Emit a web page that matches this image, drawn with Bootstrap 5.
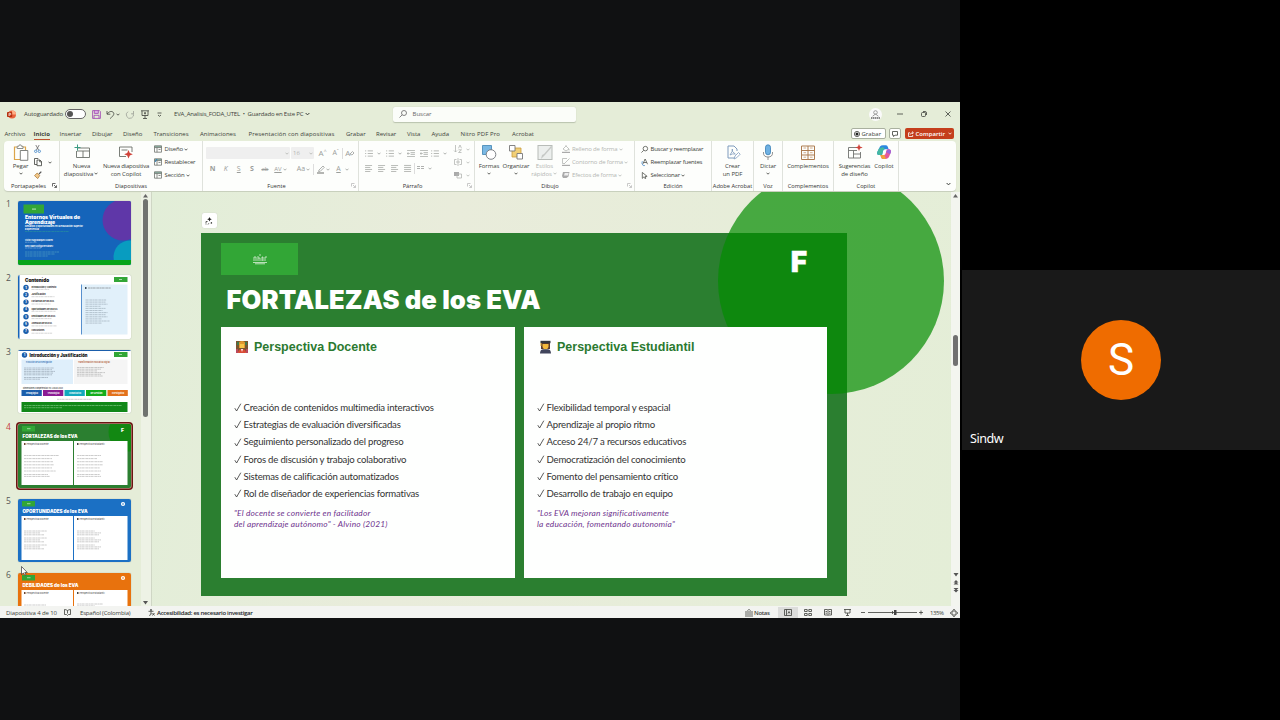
<!DOCTYPE html>
<html lang="es">
<head>
    <meta charset="UTF-8">
    <meta name="viewport" content="width=device-width, initial-scale=1.0">
    <title>EVA_Analisis_FODA_UTEL</title>
    <link rel="stylesheet" href="https://cdn.jsdelivr.net/npm/bootstrap@5.3.3/dist/css/bootstrap.min.css">
    <style>
        body {
            width: 1280px;
            height: 720px;
            background: #000;
            font-family: "Open Sans", "Noto Sans", sans-serif;
            font-size: 6px;
            line-height: 8px;
            color: #3c3f3a;
        }
        svg { display: block; flex: none; overflow: visible; }
        .ln { fill: none; stroke: currentColor; stroke-width: .8; }
        .shared { width: 960px; background: #101112; padding: 102px 0; }
        .ppt { height: 516px; background: #e5edd8; }

        /* title bar */
        .titlebar { height: 24px; padding-left: 7px; }
        .titlebar > * { flex: none; }
        .auto-label { width: 41px; margin-left: 8px; letter-spacing: -.1px; }
        .doc-name { width: 131px; margin-left: 12px; letter-spacing: -.17px; white-space: nowrap; }
        .switch { width: 21px; height: 10px; border: .8px solid #666; border-radius: 5px; background: #fff; padding: 1px; }
        .switch i { display: block; width: 6px; height: 6px; border-radius: 50%; background: #555; }
        .finder { width: 183px; height: 15px; background: #fbfdf9; border-radius: 2px; box-shadow: 0 .5px 1px #b9c2ae; color: #666; margin-left: 82.5px; padding-left: 6px; }
        .user { width: 13px; height: 13px; border-radius: 50%; background: #fafafa; margin-left: 293px; }

        /* tabs */
        .tabs { height: 15px; padding-left: 4.5px; }
        .tab-grid { display: grid; width: 846px; grid-template-columns: 29px 26px 32.5px 31px 30.5px 46.5px 48.5px 97.5px 30px 31px 24.5px 29px 51.5px 40px; }
        .tab-grid span { white-space: nowrap; }
        .tab-grid .wide-tab { letter-spacing: .11px; }
        .tab-grid .on b { border-bottom: 1px solid #c0512f; padding-bottom: 1px; }
        .pill { height: 11px; border: .8px solid #a9b09f; border-radius: 2px; background: #fff; }
        .share { width: 49px; height: 11px; border-radius: 2px; background: #c43e1c; color: #fff; }

        /* ribbon */
        .ribbon { height: 50px; margin: 0 4px; width: 952px; background: #fdfefc; border-radius: 4px; box-shadow: 0 1px 1px #c5ccbb; }
        .grp { position: relative; flex: none; border-right: 1px solid #dfe2dc; }
        .grp-body { height: 41px; padding-top: 3px; }
        .grp-name { height: 9px; line-height: 9px; font-size: 5.7px; text-align: center; color: #333; white-space: nowrap; }
        .corner { position: absolute; right: 2px; bottom: 3px; color: #bbb; }
        .w-clip { width: 56px; } .w-slides { width: 143px; } .w-font { width: 156px; } .w-para { width: 116px; }
        .w-draw { width: 160px; } .w-edit { width: 77px; } .w-pdf { width: 42px; } .w-voice { width: 29px; }
        .w-addin { width: 51px; } .w-cop { width: 65px; }
        .big { display: flex; flex-direction: column; align-items: center; flex: none; text-align: center; white-space: nowrap; line-height: 8px; letter-spacing: -.08px; }
        .big svg:first-child { margin-bottom: 1px; }
        .off { color: #b4b6b3; }
        .stack { display: grid; grid-auto-rows: 13px; grid-template-rows: 13px 13px 13px; align-content: start; align-items: center; margin-top: -1.5px; letter-spacing: -.16px; }
        .stack > div { display: flex; align-items: center; gap: 2.5px; white-space: nowrap; height: 10px; }
        .edit-stack { height: 39px; margin: 1.5px 0 .5px 6px; letter-spacing: -.23px; }
        .chev { width: 4px; height: 3px; margin: 0 1px; display: inline-block; }
        .combo { height: 12px; background: #efefef; border-radius: 1px; color: #b4b6b3; }
        .cells { display: flex; align-items: center; height: 12px; color: #9b9d9a; }
        .cells > span { width: 13.1px; flex: none; display: flex; align-items: center; justify-content: center; }
        .cells > .wide { width: 19px; }
        .rule { width: 1px; height: 11px; background: #ddd; flex: none; }

        /* thumbnails */
        .work { height: 414px; }
        .rail { width: 141px; overflow: hidden; padding-top: 9px; }
        .thumb-row { height: 74.4px; padding-left: 6px; font: 8.5px/8px "Open Sans", sans-serif; color: #555; }
        .thumb-row > span { width: 12px; margin-top: -1.5px; flex: none; }
        .thumb-row .sheet { width: 113px; height: 63.5px; border-radius: 2px; overflow: hidden; box-shadow: 0 0 1px #8b9385; flex: none; }
        .thumb-row.active { color: #c43e3e; }
        .thumb-row.active .sheet { box-shadow: 0 0 0 .5px #d9b3a5, 0 0 0 2px #6b1512; }
        .track { width: 11px; border-right: 1px solid #cfd6c5; padding: 2px 0 0 2px; background: #edf2e5; }
        .thumb-bar { width: 5px; height: 218px; border-radius: 3px; background: #707370; margin-top: 1px; }

        /* stage */
        .stage { position: relative; flex: 1; overflow: hidden; padding: 21px 0 0 49px; background: linear-gradient(100deg, #e2eed8, #e9ecdb 35%, #e4eed7); }
        .spark { width: 15px; height: 15px; border-radius: 2px; background: #fff; box-shadow: 0 0 1px #bbb; margin: 0 0 5px .5px; }
        .slide { width: 646px; height: 363px; background: #2b7f30; padding: 10px 19px 18px 20px; }
        .disc { position: absolute; left: 566px; top: -24px; width: 226px; height: 226px; border-radius: 50%; background: rgba(3, 140, 0, .7); }
        .over { position: relative; z-index: 2; }
        .brand { width: 77px; height: 32px; background: #32a636; color: #d9efd8; }
        .letter { font: 900 28px/32px Inter, sans-serif; color: #fff; margin: 3px 21px 0 0; -webkit-text-stroke: .4px #fff; }
        .headline { font: 900 25.6px/30px Inter, sans-serif; color: #fff; margin: 7px 0 0 5.5px; height: 41.5px; white-space: nowrap; letter-spacing: .1px; }
        .panel { height: 251.5px; background: #fefffe; padding: 12px 13px; }
        .panel-a { width: 293.5px; }
        .panel-b { width: 303px; }
        .panel h2 { font: 700 12.5px/16px "Liberation Sans", sans-serif; color: #2b7a30; margin: 0 0 44.5px; gap: 4px; }
        .panel li { font: 9.6px/17.2px Lato, sans-serif; color: #333; display: flex; align-items: center; gap: 1.5px; white-space: nowrap; letter-spacing: -.2px; }
        .panel p { font: italic 8.4px/10.6px Lato, sans-serif; color: #70358f; margin: 6px 0 0; white-space: nowrap; letter-spacing: .17px; }
        .vscroll { width: 9px; background: #f3f5ef; color: #666; }
        .vscroll i { display: block; width: 5px; height: 31px; border-radius: 3px; background: #707070; }

        /* status bar */
        .status { height: 12px; background: #f3f4f1; padding-top: 1px; }
        .status > * { flex: none; white-space: nowrap; }
        .status b { letter-spacing: -.3px; }
        .status .narrow { letter-spacing: -.18px; }
        .view-on { width: 20px; height: 11px; background: #dcdddb; display: flex; justify-content: center; align-items: center; }
        .pointer { position: absolute; left: 21px; top: 566px; }

        /* call side */
        .call { width: 318px; height: 180px; background: #191919; margin: 270px 0 0 2px; }
        .face { width: 80px; height: 80px; border-radius: 50%; background: #ef6c00; color: #fff; font: 44px/81px Roboto, sans-serif; margin-bottom: 31px; }
        .nick { font: 12.6px/16px "Noto Sans", sans-serif; color: #fff; padding: 0 8px 3px; letter-spacing: -.5px; }
    </style>
</head>
<body class="d-flex overflow-hidden">
    <svg width="0" height="0" class="position-absolute">
        <symbol id="chev" viewBox="0 0 4 3"><path class="ln" d="M.5.7 2 2.2 3.5.7"/></symbol>
        <symbol id="corner" viewBox="0 0 5 5"><path class="ln" d="M.5 3.5v-3h3M2 2l2.3 2.3M4.5 2.3v2.2H2.3"/></symbol>
        <symbol id="bul" viewBox="0 0 9 8"><path class="ln" d="M3 1h6M3 4h6M3 7h6M0 1h1.3M0 4h1.3M0 7h1.3"/></symbol>
        <symbol id="ind" viewBox="0 0 9 8"><path class="ln" d="M0 .5h9M4 3h5M4 5h5M0 7.5h9M3 4H0M1.4 2.6 0 4l1.4 1.4"/></symbol>
        <symbol id="al" viewBox="0 0 9 8"><path class="ln" d="M0 .5h8M0 2.8h6M0 5.1h8M0 7.4h6"/></symbol>
        <symbol id="lay" viewBox="0 0 8 8"><path d="M.5.8h7v1.8h-7z" fill="#8db5a6"/><path class="ln" style="stroke:#70746f" d="M.5.8h7v6.4h-7zM.5 2.6h7M3 2.6v4.6M4.5 4.5h2"/></symbol>
    </svg>

    <main class="shared flex-shrink-0">
        <div class="ppt">
            <div class="titlebar d-flex align-items-center">
                <svg width="9" height="9" viewBox="0 0 9 9"><circle cx="5" cy="4.5" r="4" fill="#e8623c"/><path d="M5 .5a4 4 0 0 1 4 4H5z" fill="#ffae85"/><rect y="2" width="5.2" height="5" rx=".8" fill="#b7310f"/><path stroke="#fff" stroke-width=".7" fill="none" d="M2 6V3.2h1q.9.2.9.9T3 5H2"/></svg>
                <span class="auto-label">Autoguardado</span>
                <span class="switch"><i></i></span>
                <svg width="9" height="9" viewBox="0 0 9 9" style="margin-left:6px;color:#9a3fae"><path d="M2.3.6h4v2.8h-4z" fill="#e2b7ea"/><path class="ln" d="M.6.6h6.8l1 1v6.8H.6zM2.3.6v2.8h4V.6M2 8.4V5.3h5v3.1"/></svg>
                <svg width="9" height="9" viewBox="0 0 9 9" style="margin-left:5px"><path class="ln" d="M1 1v3.2h3.3M1.2 4C3 1.5 5.5.7 7.2 2.3 9 4.2 6.8 6 4.2 8.6"/></svg>
                <svg class="chev"><use href="#chev"/></svg>
                <svg width="9" height="9" viewBox="0 0 9 9" style="margin-left:5px;color:#9da198"><path class="ln" d="M7.5 1v2.8H5M7.2 3.3A3.6 3.6 0 1 1 2 1.7"/></svg>
                <svg width="8" height="9" viewBox="0 0 8 9" style="margin-left:6px"><path class="ln" d="M0 .8h8M1 .8v4.7h6V.8M4 5.5v3M2 8.5h4M4 2v2.4M3 3.2h2"/></svg>
                <svg width="5" height="5" viewBox="0 0 5 5" style="margin-left:8px"><path class="ln" d="M.5 1h4M1 3l1.5 1.3L4 3"/></svg>
                <span class="doc-name">EVA_Analisis_FODA_UTEL &nbsp;•&nbsp; Guardado en Este PC</span>
                <svg width="5" height="4" viewBox="0 0 4 3"><use href="#chev" width="4" height="3"/></svg>
                <div class="finder d-flex align-items-center">
                    <svg width="8" height="8" viewBox="0 0 8 8"><circle class="ln" cx="5" cy="3" r="2.5"/><path class="ln" d="M3.2 4.8.5 7.5"/></svg>
                    <span style="margin-left:6px">Buscar</span>
                </div>
                <div class="user d-flex align-items-center justify-content-center"><svg width="9" height="9" viewBox="0 0 9 9" style="color:#888"><circle class="ln" cx="4.5" cy="2.5" r="1.8"/><path class="ln" d="M1.5 6.3 4.5 4l3 2.3"/><path d="M0 8h9" stroke="#666" stroke-width="1.5" stroke-dasharray="1.5 .5"/></svg></div>
                <svg width="6" height="6" viewBox="0 0 6 6" style="margin-left:15px"><path class="ln" d="M0 3h6"/></svg>
                <svg width="6" height="6" viewBox="0 0 6 6" style="margin-left:18px"><rect class="ln" x=".5" y="1.5" width="4" height="4" rx="1"/><path class="ln" d="M2 .5h2q1.5 0 1.5 1.5v2"/></svg>
                <svg width="6" height="6" viewBox="0 0 6 6" style="margin-left:18px"><path class="ln" d="m.5.5 5 5m0-5-5 5"/></svg>
            </div>

            <nav class="tabs d-flex align-items-center">
                <div class="tab-grid">
                    <span>Archivo</span><span class="on"><b>Inicio</b></span><span>Insertar</span><span>Dibujar</span><span>Diseño</span><span>Transiciones</span><span>Animaciones</span><span class="wide-tab">Presentación con diapositivas</span><span>Grabar</span><span>Revisar</span><span>Vista</span><span>Ayuda</span><span class="wide-tab">Nitro PDF Pro</span><span>Acrobat</span>
                </div>
                <div class="pill d-flex align-items-center" style="width:35px;padding-left:2px;gap:2px"><svg width="6" height="6" viewBox="0 0 6 6"><circle class="ln" cx="3" cy="3" r="2.6"/><circle cx="3" cy="3" r="1.5" fill="#222"/></svg>Grabar</div>
                <div class="pill d-flex align-items-center justify-content-center" style="width:12px;margin-left:3.5px"><svg width="6" height="6" viewBox="0 0 6 6"><path class="ln" d="M.5.5h5v3.7H3L1.5 5.5V4.2h-1z"/></svg></div>
                <div class="share d-flex align-items-center" style="margin-left:4px;padding-left:3px;gap:1.5px"><svg width="6" height="6" viewBox="0 0 6 6"><path class="ln" d="M2 1.8H.5v3.7h4.2V4M2 3.7Q2.3 1.8 5 1.8M4 .5l1.5 1.3L4 3"/></svg><b class="fw-semibold">Compartir</b><svg class="chev"><use href="#chev"/></svg></div>
            </nav>

            <div class="ribbon d-flex">
                <section class="grp w-clip">
                    <div class="grp-body d-flex">
                        <div class="big" style="width:32px;padding-left:1px">
                            <svg width="16" height="17" viewBox="0 0 16 17"><path d="M4 3H1.5v12.5H7M10 3h2.5v3" fill="none" stroke="#dca54a" stroke-width="1.2"/><path d="M4.2 4.5V2.3h1.5q0-1.5 1.4-1.5T8.5 2.3H10v2.2z" fill="#fff" stroke="#70736f" stroke-width=".8"/><path d="M7.3 6.5h7.5v9.8H7.3z" fill="#fff" stroke="#70736f" stroke-width=".9"/></svg>
                            <span>Pegar</span><svg class="chev" style="margin-top:2px"><use href="#chev"/></svg>
                        </div>
                        <div class="stack" style="margin-left:-2px">
                            <div><svg width="7" height="8" viewBox="0 0 7 8"><path d="m1.8 0 2.8 5M5.2 0 2.4 5" stroke="#555" stroke-width=".7"/><g fill="none" stroke="#3b82c4" stroke-width=".8"><circle cx="1.7" cy="6.3" r="1.2"/><circle cx="5.3" cy="6.3" r="1.2"/></g></svg></div>
                            <div><svg width="8" height="8" viewBox="0 0 8 8"><path class="ln" d="M3 6.5H.5v-6h3.8M3 2h3l1.5 1.5v4.2H3zM5.7 2v1.8h1.8"/></svg><svg class="chev" style="margin-left:3px"><use href="#chev"/></svg></div>
                            <div><svg width="8" height="8" viewBox="0 0 8 8"><path d="M7.3.6 5 3" stroke="#555" stroke-width="1.2"/><path d="m3.2 2 2.5 2.6-2 3-3.2-3z" fill="#f2c98c" stroke="#a77129" stroke-width=".7"/></svg></div>
                        </div>
                    </div>
                    <div class="grp-name" style="padding-right:6px">Portapapeles</div>
                    <svg class="corner" style="color:#444" width="5" height="5"><use href="#corner"/></svg>
                </section>

                <section class="grp w-slides">
                    <div class="grp-body d-flex">
                        <div class="big" style="width:43px">
                            <svg width="16" height="17" viewBox="0 0 16 17"><path d="M3.5 4h12v9.5h-13V7M3 7h12.5M9 7v6.5" fill="none" stroke="#6b706a" stroke-width=".9"/><path d="M3.5.5v6M.5 3.5h6" stroke="#3b9c83" stroke-width="1"/></svg>
                            <span>Nueva</span><span>diapositiva<svg class="chev"><use href="#chev"/></svg></span>
                        </div>
                        <div class="big" style="width:46px">
                            <svg width="16" height="17" viewBox="0 0 16 17"><path d="M8 12.5H1.5V3h12.5v5M3.5 6h6" fill="none" stroke="#6b706a" stroke-width=".9"/><path d="m10.5 6 1.3 3 3 1.2-3 1.3-1.3 3-1.3-3-3-1.3 3-1.2z" fill="#d0433a"/></svg>
                            <span style="letter-spacing:-.2px">Nueva diapositiva</span><span>con Copilot</span>
                        </div>
                        <div class="stack" style="margin-left:5px">
                            <div><svg width="8" height="8"><use href="#lay"/></svg>Diseño<svg class="chev" style="margin-left:-1px"><use href="#chev"/></svg></div>
                            <div><svg width="8" height="8"><use href="#lay"/><path d="M1 4 3 1" stroke="#2c7fbd"/></svg>Restablecer</div>
                            <div><svg width="8" height="8"><use href="#lay"/></svg>Sección<svg class="chev" style="margin-left:-1px"><use href="#chev"/></svg></div>
                        </div>
                    </div>
                    <div class="grp-name">Diapositivas</div>
                </section>

                <section class="grp w-font">
                    <div class="grp-body" style="padding:6px 0 0 3px">
                        <div class="d-flex align-items-center">
                            <div class="combo d-flex align-items-center justify-content-end" style="width:84px"><svg class="chev"><use href="#chev"/></svg></div>
                            <div class="combo d-flex align-items-center justify-content-between" style="width:23px;margin-left:1px;padding-left:2px">16<svg class="chev"><use href="#chev"/></svg></div>
                            <div class="cells" style="margin-left:2px;font-size:8px"><span>A<sup style="font-size:5px">^</sup></span><span style="font-size:7px">A<sup style="font-size:5px">ˇ</sup></span><i class="rule"></i><span>A<svg width="4" height="4" viewBox="0 0 4 4"><path class="ln" d="m0 3 2.5-2.5L4 2 2 4z"/></svg></span></div>
                        </div>
                        <div class="cells" style="margin-top:4px;font-size:7px">
                            <span><b>N</b></span><span><i>K</i></span><span><u>S</u></span><span><b>S</b></span><span style="font-size:6px"><s>ab</s></span><span class="wide" style="font-size:6px"><u>AV</u><svg class="chev"><use href="#chev"/></svg></span><span class="wide ms-1">Aa<svg class="chev"><use href="#chev"/></svg></span><i class="rule"></i>
                            <span class="wide"><svg width="8" height="9" viewBox="0 0 8 9"><path class="ln" d="m2 5 4-4 1.3 1.3-4 4L1.5 6.5z"/><path d="M0 8h7" stroke="currentColor" stroke-width="1.5"/></svg><svg class="chev"><use href="#chev"/></svg></span>
                            <span class="wide"><u>A</u><svg class="chev ms-1"><use href="#chev"/></svg></span>
                        </div>
                    </div>
                    <div class="grp-name" style="padding-right:8px">Fuente</div>
                    <svg class="corner" width="5" height="5"><use href="#corner"/></svg>
                </section>

                <section class="grp w-para">
                    <div class="grp-body d-flex" style="padding:6px 0 0 3px">
                        <div style="width:92px">
                            <div class="cells off">
                                <span class="wide" style="margin-left:2px"><svg width="8" height="7"><use href="#bul"/></svg><svg class="chev ms-1"><use href="#chev"/></svg></span><span class="wide" style="margin-left:2px"><svg width="8" height="7"><use href="#bul"/></svg><svg class="chev ms-1"><use href="#chev"/></svg></span>
                                <span><svg width="8" height="7"><use href="#ind"/></svg></span><span><svg width="8" height="7"><use href="#ind"/></svg></span><span class="wide"><svg width="8" height="7"><use href="#bul"/></svg><svg class="chev ms-1"><use href="#chev"/></svg></span>
                            </div>
                            <div class="cells off" style="margin-top:3px">
                                <span><svg width="8" height="7"><use href="#al"/></svg></span><span><svg width="8" height="7"><use href="#al"/></svg></span><span><svg width="8" height="7"><use href="#al"/></svg></span><span><svg width="8" height="7" viewBox="0 0 9 8"><path class="ln" d="M0 .5h8M0 2.8h8M0 5.1h8M0 7.4h8"/></svg></span><i class="rule"></i>
                                <span class="wide"><svg width="7" height="6" viewBox="0 0 7 6"><path class="ln" d="M0 1.500h3M4 1.500h3M0 3.500h3M4 3.500h3"/></svg><svg class="chev ms-1"><use href="#chev"/></svg></span>
                            </div>
                        </div>
                        <div class="stack off" style="margin-top:-4.5px">
                            <div><svg width="8" height="8" viewBox="0 0 8 8"><path class="ln" d="M1.5 0v7M0 5.5 1.5 7 3 5.5M4.5 3.3 6 0l1.5 3.3M4.5 4.8h3l-3 2.7h3"/></svg><svg class="chev"><use href="#chev"/></svg></div>
                            <div><svg width="8" height="8" viewBox="0 0 8 8"><path class="ln" d="M2.5 1.5h-2v5h2M5.5 1.5h2v5h-2M4 0v8M2 4h4"/></svg><svg class="chev"><use href="#chev"/></svg></div>
                            <div><svg width="8" height="8" viewBox="0 0 8 8"><path d="M0 1h5v4H0z" fill="#aaa"/><path class="ln" d="M3 3h4.5v4H3z"/></svg><svg class="chev"><use href="#chev"/></svg></div>
                        </div>
                    </div>
                    <div class="grp-name" style="padding-right:8px">Párrafo</div>
                    <svg class="corner" width="5" height="5"><use href="#corner"/></svg>
                </section>

                <section class="grp w-draw">
                    <div class="grp-body d-flex">
                        <div class="big" style="width:28px"><svg width="16" height="17" viewBox="0 0 16 17"><path d="M1.5 1.5h9v9h-9z" fill="#7ab8e3" stroke="#3f83b3" stroke-width=".8"/><circle cx="10" cy="10.5" r="4.8" fill="#fff" stroke="#70757a" stroke-width=".9"/></svg><span>Formas</span><svg class="chev" style="margin-top:2px"><use href="#chev"/></svg></div>
                        <div class="big" style="width:26px"><svg width="16" height="17" viewBox="0 0 16 17"><path d="M4 4h9v9H4z" fill="#f1cf77" stroke="#c99c3d" stroke-width=".8"/><path d="M1.5 1.5h5.5V7H1.5zM9 9.5h5.5v5.5H9z" fill="#fff" stroke="#777" stroke-width=".9"/></svg><span>Organizar</span><svg class="chev" style="margin-top:2px"><use href="#chev"/></svg></div>
                        <div class="big off" style="width:31px"><svg width="16" height="17" viewBox="0 0 16 17"><rect x="1" y="1.5" width="14" height="14" fill="#ecefed" stroke="#b8bcb8"/><path d="m15 3-7 8-4 4 1-4 2-1 7-8z" fill="#c6c9c6"/></svg><span>Estilos</span><span>rápidos<svg class="chev"><use href="#chev"/></svg></span></div>
                        <div class="stack off" style="margin-left:1.5px">
                            <div><svg width="8" height="8" viewBox="0 0 8 8"><path class="ln" d="m1 4 3-3 3 3-3 2zM4 1V0M7 4v1.5"/><path d="M0 7.4h8" stroke="#aaa" stroke-width="1.2"/></svg>Relleno de forma<svg class="chev" style="margin-left:-1px"><use href="#chev"/></svg></div>
                            <div><svg width="8" height="8" viewBox="0 0 8 8"><path class="ln" d="M5 .5H.5v5H3M2.5 5.5l5-5"/><path d="M0 7.4h8" stroke="#aaa" stroke-width="1.2"/></svg>Contorno de forma<svg class="chev" style="margin-left:-1px"><use href="#chev"/></svg></div>
                            <div><svg width="8" height="8" viewBox="0 0 8 8"><path d="m0 5 1-4h6.5l-1 4.5L4.5 7H1z" fill="#aaa"/><path d="m2 4.5.7-2.5h4l-.7 2.5z" fill="#eee"/></svg>Efectos de forma<svg class="chev" style="margin-left:-1px"><use href="#chev"/></svg></div>
                        </div>
                    </div>
                    <div class="grp-name" style="padding-right:9px">Dibujo</div>
                    <svg class="corner" width="5" height="5"><use href="#corner"/></svg>
                </section>

                <section class="grp w-edit">
                    <div class="d-flex"><div class="stack edit-stack">
                        <div><svg width="7" height="7" viewBox="0 0 8 8"><circle class="ln" cx="5" cy="3" r="2.6"/><path class="ln" d="M3 5 .5 7.5"/></svg>Buscar y reemplazar</div>
                        <div><svg width="7" height="7" viewBox="0 0 8 8"><path class="ln" d="M2 6 4.7 0 7.5 6M3 4h3.5"/><path d="M1.5 2.5Q0 5 2.5 7.5h2" fill="none" stroke="#3b82c4" stroke-width=".8"/></svg>Reemplazar fuentes</div>
                        <div><svg width="7" height="7" viewBox="0 0 8 8"><path class="ln" d="M1.5.5v6.8L3.3 5.6l1.3 2 1-.6-1-2H7z"/></svg>Seleccionar<svg class="chev" style="margin-left:-1px"><use href="#chev"/></svg></div>
                    </div></div>
                    <div class="grp-name">Edición</div>
                </section>

                <section class="grp w-pdf">
                    <div class="grp-body"><div class="big"><svg width="16" height="17" viewBox="0 0 16 17"><path d="M12 7V5L9 2H3v12h6" fill="none" stroke="#7f9bbd"/><path d="M5 11q3-4 2.3-6-.8 3 3 5-3-.6-5.3 1" fill="none" stroke="#7f9bbd" stroke-width=".8"/><path d="m9 15 1-3 3.5-3.5 1.7 1.7-3.5 3.5z" fill="#fff" stroke="#7f9bbd" stroke-width=".8"/></svg><span>Crear</span><span>un PDF</span></div></div>
                    <div class="grp-name">Adobe Acrobat</div>
                </section>
                <section class="grp w-voice">
                    <div class="grp-body"><div class="big"><svg width="16" height="17" viewBox="0 0 16 17"><rect x="5.5" y=".8" width="5" height="10" rx="2.5" fill="#6fb1e2" stroke="#397fb5" stroke-width=".8"/><path d="M3.5 8v1q0 4 4.5 4t4.5-4V8M8 13v3" fill="none" stroke="#777" stroke-width=".8"/></svg><span>Dictar</span><svg class="chev" style="margin-top:2px"><use href="#chev"/></svg></div></div>
                    <div class="grp-name">Voz</div>
                </section>
                <section class="grp w-addin">
                    <div class="grp-body"><div class="big"><svg width="16" height="17" viewBox="0 0 16 17"><path d="M1.5 2h13v13.5h-13zM1.5 6.5h13M1.5 11h13M8 2v13.5" fill="none" stroke="#ad7d51" stroke-width="1"/><path d="M3.5 4h2.6M10 4h2.6M3.5 8.7h2.6M10 8.7h2.6M3.5 13.2h2.6M10 13.2h2.6" stroke="#c79a71" stroke-width=".8"/></svg><span>Complementos</span></div></div>
                    <div class="grp-name">Complementos</div>
                </section>
                <section class="grp w-cop">
                    <div class="grp-body d-flex">
                        <div class="big" style="width:37px;padding-left:4px"><svg width="16" height="17" viewBox="0 0 16 17"><path d="M10 3.5H1.5V14h12V8M1.5 6.5H10M6.5 6.5V14M6.5 10h7" fill="none" stroke="#70736f" stroke-width=".9"/><path d="m12 0 1 2.5 2.7 1-2.7 1-1 2.5-1-2.5-2.7-1 2.7-1z" fill="#d0433a"/></svg><span style="letter-spacing:-.2px">Sugerencias</span><span>de diseño</span></div>
                        <div class="big" style="width:26px"><svg width="16" height="17" viewBox="0 0 16 17"><path d="M4 2.5Q5 1.3 7 1.3h3q1.4 0 2 2l.6 2H9Q7.5 5 7 7l-1 4H3Q.5 11 1.3 8z" fill="#2b87e0"/><path d="M3 4.5 1.3 8Q.5 11 3 11h3l1-4q.5-2 2-1.7L7 3z" fill="#43b8a0"/><path d="M12 5.3q3.5-.3 2.8 3l-1.5 4Q12.5 15 10 15H7q-1.5 0-2-2l-.6-2H8q1.3 0 1.8-2l.8-3q.3-.7 1.4-.7z" fill="#e6589b"/><path d="m4.4 11 .6 2q.5 2 2 2h3L8.5 11z" fill="#f0a13b"/><path d="M12 5.3q3.5-.3 2.8 3l-.7 2L10 8z" fill="#9a63dc"/></svg><span>Copilot</span></div>
                    </div>
                    <div class="grp-name">Copilot</div>
                </section>
                <svg class="ms-auto mt-auto" width="5" height="4" style="margin:0 5px 5px" viewBox="0 0 4 3"><use href="#chev" width="4" height="3"/></svg>
            </div>
            <div style="height:1px"></div>

            <div class="work d-flex">
                <aside class="rail flex-shrink-0" id="rail"></aside>
                <div class="track flex-shrink-0 d-flex flex-column">
                    <svg width="5" height="4" viewBox="0 0 5 4"><path d="M2.5 0 5 3.5H0z" fill="#666"/></svg>
                    <div class="thumb-bar"></div>
                    <svg class="mt-auto" width="5" height="4" viewBox="0 0 5 4" style="margin-bottom:1px"><path d="M0 0h5L2.5 3.5z" fill="#555"/></svg>
                </div>

                <div class="stage">
                    <div class="spark d-flex align-items-center justify-content-center"><svg width="8" height="8" viewBox="0 0 8 8"><path d="m4.5 0 .7 1.6 1.6.7-1.6.7-.7 1.6-.7-1.6-1.6-.7 1.6-.7z" fill="#222"/><path class="ln" d="M1 4.5v3M1 4.5h2M3 7.5l1-1.5M5.500 6h2M6.500 5v2" stroke-dasharray="1.500 .4"/></svg></div>
                    <div class="slide">
                        <div class="d-flex justify-content-between">
                            <div class="brand d-flex align-items-center justify-content-center"><svg width="14" height="10" viewBox="0 0 14 10"><path d="M0 8.5h14M1 7V3h2v4M5 7V2M5 4h2v3M9 7V3M9 3h1v4M12 7V3h2M7 2V0M2 9.8h10" fill="none" stroke="currentColor" stroke-width=".8"/></svg></div>
                            <div class="letter over">F</div>
                        </div>
                        <div class="headline">FORTALEZAS de los EVA</div>
                        <div class="d-flex over" style="gap:9.5px">
                            <article class="panel panel-a">
                                <h2 class="d-flex align-items-center"><svg width="16" height="14" viewBox="0 0 16 14"><path d="M2 1h12v11H2z" fill="#7a5630"/><path d="M3 2h3v3H3zM10 2h3v3h-3z" fill="#3f7a4b"/><path d="M5 3q0-2 3-2t3 2v5H5z" fill="#e0982f"/><path d="M6 4h4v4H6z" fill="#f7c548"/><path d="M4 13q0-4 4-4t4 4z" fill="#d94b35"/><path d="m7 9 1 3 1-3z" fill="#fff"/><path d="M2 9h2v4H2zM12 9h2v4h-2z" fill="#b9485d"/></svg>Perspectiva Docente</h2>
                                <ul class="list-unstyled m-0" id="docente"></ul>
                                <p>"El docente se convierte en facilitador<br>del aprendizaje autónomo" - Alvino (2021)</p>
                            </article>
                            <article class="panel panel-b">
                                <h2 class="d-flex align-items-center"><svg width="16" height="14" viewBox="0 0 16 14"><path d="M4 3h9v6H4z" fill="#5b3b2c"/><path d="M5.5 4h6v3q-1 2.5-3 2.5t-3-2.5z" fill="#f3b93c"/><path d="M3.5.8h10v2.4h-10z" fill="#33373e"/><path d="M3 13.5q0-4.3 3.5-4.3h4q3.5 0 3.5 4.3z" fill="#41455c"/><path d="M4 3v3" stroke="#e0a92e"/></svg>Perspectiva Estudiantil</h2>
                                <ul class="list-unstyled m-0" id="estudiantil"></ul>
                                <p>"Los EVA mejoran significativamente<br>la educación, fomentando autonomía"</p>
                            </article>
                        </div>
                    </div>
                    <div class="disc"></div>
                </div>
                <div class="vscroll d-flex flex-column align-items-center">
                    <svg width="5" height="4" viewBox="0 0 5 4" style="margin:2px 0 137px"><path d="M2.5 0 5 3.5H0z" fill="#666"/></svg><i></i>
                    <svg class="mt-auto" width="6" height="22" viewBox="0 0 6 22" style="margin-bottom:12px"><path d="M.5 1h5L3 4.5zM3 8l2.500 2.500h-5zM3 10l2.500 2.500h-5zM.5 16h5L3 18.500zM.5 18h5L3 20.500z" fill="#555"/></svg>
                </div>
            </div>

            <footer class="status d-flex align-items-center">
                <span class="narrow" style="margin-left:6px;width:58px;letter-spacing:-.1px">Diapositiva 4 de 10</span>
                <svg width="7" height="7" viewBox="0 0 7 7"><path class="ln" d="M3.5 1.5Q2 .5.5.5v5h2l1 1 1-1h2v-5Q5 .5 3.5 1.5v3"/></svg>
                <span class="narrow" style="margin-left:9px;width:68px">Español (Colombia)</span>
                <svg width="7" height="7" viewBox="0 0 7 7"><circle cx="3" cy="1" r=".9" fill="#444"/><path class="ln" d="M.5 2.3h5M3 2.3v2L1.5 7M3 4.3 4 5.5M4.5 4l2 2.5M6.5 4l-2 2.5"/></svg>
                <span style="margin-left:2px;width:588px"><b class="fw-semibold text-dark">Accesibilidad: es necesario investigar</b></span>
                <svg width="8" height="7" viewBox="0 0 8 7"><path class="ln" d="M0 3h8M0 5h8M0 7h8M2.5 1.8 4 .3l1.5 1.5"/></svg>
                <b class="fw-semibold" style="margin-left:1px;width:24px">Notas</b>
                <span class="view-on"><svg width="8" height="7" viewBox="0 0 8 7"><path class="ln" d="M.5.5h7v6h-7zM2.5.5v6M4 4.5l1-2 1 2"/></svg></span>
                <svg width="8" height="7" viewBox="0 0 8 7" style="margin-left:6px"><path class="ln" d="M.5.5h2.7v2H.5zM4.8.5h2.7v2H4.8zM.5 4.5h2.7v2H.5zM4.8 4.5h2.7v2H4.8z"/></svg>
                <svg width="8" height="7" viewBox="0 0 8 7" style="margin-left:12px"><path class="ln" d="M.5.5h3l.5.5.5-.5h3v5.5h-3L4 6.5 3.5 6h-3zM4 1v5M1.500 2.500h1.500M5 2.500h1.500M1.500 4.200h1.500M5 4.200h1.500"/></svg>
                <svg width="7" height="7" viewBox="0 0 7 7" style="margin-left:12px"><path class="ln" d="M0 .5h7M1 .5v3.5h5V.5M3.5 4v2.5M2 6.5h3"/></svg>
                <svg width="60" height="7" viewBox="0 0 60 7" style="margin:0 0 0 10px"><path class="ln" d="M0 3.5h4M7 3.5h49M58 3.5h4M60 1.5v4M31.5 2v3"/><path d="M33 1h2.5v5H33z" fill="#444"/></svg>
                <span style="margin-left:9px;width:18px;letter-spacing:-.4px">135%</span>
                <svg width="8" height="8" viewBox="0 0 8 8" style="margin-left:2px"><path class="ln" d="M2 2h4v4H2zM2.8 1.3 4 .3l1.2 1M2.8 6.7l1.2 1 1.2-1M1.3 2.8.3 4l1 1.2M6.700 2.800l1 1.200-1 1.200"/></svg>
            </footer>
        </div>
        <svg class="pointer" width="7" height="10" viewBox="0 0 7 10"><path d="M.5.5v8L2.5 7l1.3 2.5 1.2-.6L3.8 6.5h2.5z" fill="#fff" stroke="#333" stroke-width=".7"/></svg>
    </main>

    <aside class="call d-flex flex-column justify-content-end">
        <div class="face text-center mx-auto">S</div>
        <div class="nick">Sindw</div>
    </aside>

    <script src="https://cdn.jsdelivr.net/npm/bootstrap@5.3.3/dist/js/bootstrap.bundle.min.js"></script>
    <script>
        const docente = ['Creación de contenidos multimedia interactivos', 'Estrategias de evaluación diversificadas', 'Seguimiento personalizado del progreso', 'Foros de discusión y trabajo colaborativo', 'Sistemas de calificación automatizados', 'Rol de diseñador de experiencias formativas'];
        const estudiantil = ['Flexibilidad temporal y espacial', 'Aprendizaje al propio ritmo', 'Acceso 24/7 a recursos educativos', 'Democratización del conocimiento', 'Fomento del pensamiento crítico', 'Desarrollo de trabajo en equipo'];
        const check = '<svg width="8" height="9" viewBox="0 0 8 9"><path d="M.8 5.2 2.6 8 6.8.7" fill="none" stroke="#333" stroke-width=".8"/></svg>';

        function fillList(id, items) {
            document.getElementById(id).innerHTML = items.map(t => `<li>${check}<span>${t}</span></li>`).join('');
        }
        fillList('docente', docente);
        fillList('estudiantil', estudiantil);

        const rect = (x, y, w, h, fill) => `<rect x="${x}" y="${y}" width="${w}" height="${h}" fill="${fill}"/>`;
        const text = (x, y, size, w, fill, t, weight = 900) => `<text x="${x}" y="${y}" font-size="${size}" font-weight="${weight}" font-family="Inter, sans-serif" fill="${fill}" textLength="${w}" lengthAdjust="spacingAndGlyphs">${t}</text>`;
        // unreadably small copy is drawn as thin dashes
        const copy = (x, y, widths, step, color = '#999') => widths.map((w, i) => `<path d="M${x} ${y + i * step}h${w}" stroke="${color}" stroke-width=".5" stroke-dasharray="2.5 .4 1.3 .3"/>`).join('');

        function fodaThumb(color, title, w, letter, lines) {
            return rect(0, 0, 113, 64, color) +
                (letter === 'F' ? '<circle cx="110" cy="8" r="19.5" fill="#128812"/>' : `<circle cx="105" cy="5" r="2.1" fill="#fff"/><circle cx="105" cy="5" r=".8" fill="${color}"/>`) +
                rect(4, 2, 13, 5.5, '#32a636') + rect(9, 4.2, 3.5, 1, '#9fd6a0') +
                (letter === 'F' ? text(103, 8, 5, 3, '#fff', 'F') : '') +
                text(4.5, 14, 4.2, w, '#fff', title) +
                rect(3.5, 17, 51.5, 44, '#fff') + rect(56, 17, 53.5, 44, '#fff') +
                rect(6, 19, 1.5, 2, '#6b4531') + rect(59, 19, 1.5, 2, '#444') +
                text(8.5, 21, 2.2, 22, '#555', 'Perspectiva Docente', 500) + text(61.5, 21, 2.2, 25, '#555', 'Perspectiva Estudiantil', 500) + lines;
        }

        const slides = [
            rect(0, 0, 113, 64, '#1564ba') + '<circle cx="105" cy="19" r="20.5" fill="#5f37a8"/><circle cx="112" cy="56" r="16.5" fill="#089cc0"/>' + rect(0, 59, 113, 5, '#08a51a') +
                rect(5.5, 3.5, 20.5, 9, '#32a636') + rect(14, 7.5, 4, 1.2, '#a5dba6') +
                text(7, 18, 4.4, 55, '#fff', 'Entornos Virtuales de') + text(7, 23.2, 4.4, 30, '#fff', 'Aprendizaje') +
                text(7, 26.2, 2.3, 58, '#fff', 'Desafíos y oportunidades en la educación superior', 700) + text(7, 29.2, 2.3, 14, '#fff', 'Experiencia', 700) +
                copy(7, 30.5, [44], 1, '#2f9f93') + text(7, 39.5, 2.3, 28, '#fff', 'Víctor Hugo Marquez Alvarez', 700) + copy(7, 41.2, [12], 1, '#9fc7e8') +
                text(7, 45.5, 2.3, 28, '#fff', 'Nelly Isabel Zuñiga Hernández', 700) + copy(7, 47, [16], 1, '#9fc7e8') + copy(7, 51, [34, 30, 23], 2, '#69b5c6'),
            rect(0, 0, 113, 64, '#fff') + rect(0, 0, 1.5, 64, '#1564ba') + text(7, 6.8, 4.4, 24, '#111', 'Contenido') + rect(96, 2, 13.5, 5, '#32a636') + rect(101, 4, 3, 1, '#a5dba6') +
                rect(63.5, 9.5, 46, 50, '#e1f0fa') + rect(63, 9.5, .7, 50, '#1564ba') + rect(67, 12, 1.5, 2, '#345') + copy(70, 13, [23], 1, '#555') +
                copy(67.5, 25, [21, 20, 22, 15, 20, 17, 22, 20, 22, 16, 24, 16], 2.1, '#8797a3') +
                ['Introducción y Contexto', 'Justificación', 'Fortalezas de los EVA', 'Oportunidades de los EVA', 'Debilidades de los EVA', 'Amenazas de los EVA', 'Conclusiones'].map((t, i) => `<circle cx="8" cy="${12.5 + i * 7.3}" r="2.7" fill="#1b5eab"/>` + text(7.3, 13.5 + i * 7.3, 2.8, 1.4, '#fff', i + 1) + text(13.5, 12.6 + i * 7.3, 2.2, t.length * 1.08, '#222', t, 700) + copy(13.5, 14.4 + i * 7.3, [18 + (i * 5) % 9], 1, '#aaa')).join(''),
            rect(0, 0, 113, 64, '#fff') + rect(0, 0, 113, 1, '#1b5eab') + '<circle cx="6.5" cy="5" r="2.7" fill="#1b5eab"/>' + text(6, 6.2, 2.8, 1.2, '#fff', '1') +
                text(11.5, 6.5, 4.2, 58, '#111', 'Introducción y Justificación') + rect(96, 2, 13.5, 5, '#32a636') + rect(101, 4, 3, 1, '#a5dba6') + rect(3.5, 9.5, 51.5, 24.5, '#dfeffb') + rect(56, 9.5, 53.5, 24.5, '#f5f5f5') +
                text(8, 12.8, 2.2, 26, '#1b5eab', 'Evolución de la Investigación', 500) + text(60, 12.8, 2.2, 32, '#a94722', 'Transformación Educativa Digital', 500) +
                copy(6, 18, [30, 28, 31, 29, 28], 1.7, '#7c8b98') + copy(6, 27.5, [24, 16], 1.7, '#7c8b98') + copy(59, 17.5, [27, 24, 20, 28, 24, 26], 1.7) +
                text(5, 38.5, 2.3, 40, '#333', 'Dimensiones Competencias TIC-UNAD 2023', 500) +
                ['#1b5eab', '#8b1b93', '#12a9bd', '#14ad1c', '#e3711b'].map((c, i) => rect(3.5 + i * 21.5, 40, 20.3, 6, c) + text(8 + i * 21.5, 43.8, 2, 12, '#fff', ['Pedagógica', 'Tecnológica', 'Comunicativa', 'de Gestión', 'Investigativa'][i], 700)).join('') +
                copy(39, 49.3, [35], 1) + rect(3.5, 52, 106, 10, '#118818') + copy(6, 55.5, [98, 38], 2.2, '#a9dcab'),
            fodaThumb('#2b7f30', 'FORTALEZAS de los EVA', 55, 'F', copy(6, 31.5, [35, 28, 29, 30, 28, 32], 3.1) + copy(6, 50.5, [24, 26], 1.9) + copy(59, 31.5, [24, 20, 26, 26, 23, 24], 3.1) + copy(59, 50.5, [23, 24], 1.9)),
            fodaThumb('#1b70c4', 'OPORTUNIDADES de los EVA', 65, 'O', [0, 1, 2].map(i => copy(6, 32 + i * 7, [23, 16, 20], 1.9) + copy(59, 32 + i * 7, [18, 24, 22], 1.9)).join('')),
            fodaThumb('#e8720d', 'DEBILIDADES de los EVA', 56, 'D', copy(6, 32, [22, 18], 1.9) + copy(59, 31, [26, 18], 1.9))
        ];

        document.getElementById('rail').innerHTML = slides.map((s, i) => `
            <div class="thumb-row d-flex ${i === 3 ? 'active' : ''}">
                <span>${i + 1}</span>
                <div class="sheet"><svg width="113" height="63.5" viewBox="0 0 113 63.5">${s}</svg></div>
            </div>`).join('');
    </script>
</body>
</html>
